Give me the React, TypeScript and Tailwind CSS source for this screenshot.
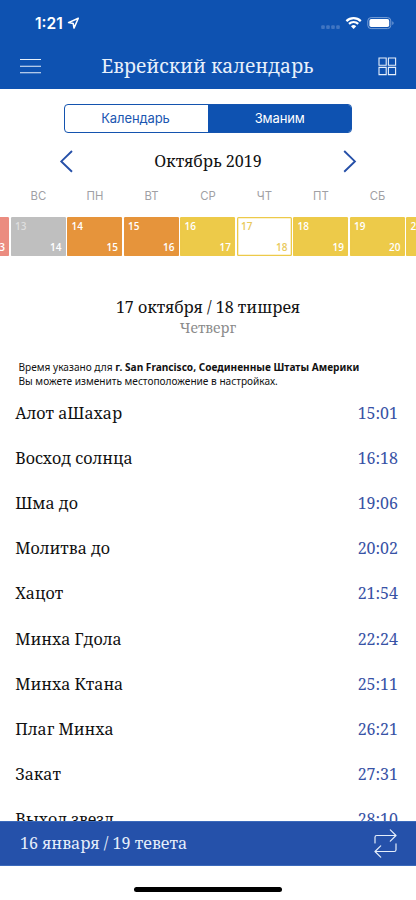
const serif = "font-['Noto_Serif','DejaVu_Serif_Condensed','DejaVu_Serif',serif]";

const weekdays = ['ВС', 'ПН', 'ВТ', 'СР', 'ЧТ', 'ПТ', 'СБ'];

const days = [
  { top: '12', bottom: '13', style: 'bg-[#eb8c80] inset-ring-[#eb8c80] text-white' },
  { top: '13', bottom: '14', style: 'bg-[#bfbfbf] inset-ring-[#bfbfbf] text-white', dim: true },
  { top: '14', bottom: '15', style: 'bg-[#e6943b] inset-ring-[#e6943b] text-white' },
  { top: '15', bottom: '16', style: 'bg-[#e6943b] inset-ring-[#e6943b] text-white' },
  { top: '16', bottom: '17', style: 'bg-[#edca49] inset-ring-[#edca49] text-white' },
  { top: '17', bottom: '18', style: 'bg-white inset-ring-[#edca49] text-[#e9c95c]' },
  { top: '18', bottom: '19', style: 'bg-[#edca49] inset-ring-[#edca49] text-white' },
  { top: '19', bottom: '20', style: 'bg-[#edca49] inset-ring-[#edca49] text-white' },
  { top: '20', bottom: '21', style: 'bg-[#edca49] inset-ring-[#edca49] text-white' },
];

const times = [
  ['Алот аШахар', '15:01'],
  ['Восход солнца', '16:18'],
  ['Шма до', '19:06'],
  ['Молитва до', '20:02'],
  ['Хацот', '21:54'],
  ['Минха Гдола', '22:24'],
  ['Минха Ктана', '25:11'],
  ['Плаг Минха', '26:21'],
  ['Закат', '27:31'],
  ['Выход звезд', '28:10'],
];

function StatusBar() {
  return (
    <div className="flex h-[44px] items-center pt-[2px] pr-[22px] pl-[35px] text-white">
      <span className="font-['Inter',sans-serif] pt-[1px] text-[15.5px] leading-none font-semibold">1:21</span>
      <svg className="ml-[4px]" width="13" height="13" viewBox="0 0 13 13" fill="none" stroke="currentColor" strokeWidth="1.5" strokeLinejoin="round">
        <path d="M11.3 1.2 1.5 5.6l4.7.9.8 4.6z" />
      </svg>
      <svg className="ml-auto" width="74" height="16" viewBox="0 0 74 16">
        <g fill="#4075c2">
          <rect x="1.2" y="10.3" width="3.6" height="3.6" rx="1" />
          <rect x="6.2" y="10.3" width="3.6" height="3.6" rx="1" />
          <rect x="11.2" y="10.3" width="3.6" height="3.6" rx="1" />
          <rect x="16.2" y="10.3" width="3.6" height="3.6" rx="1" />
        </g>
        <g fill="none" stroke="#fff" strokeWidth="2.2">
          <path d="M26.4 6.1a10.3 10.3 0 0 1 14.4 0" />
          <path d="M29 8.9a6.5 6.5 0 0 1 9.2 0" />
        </g>
        <path d="M31 11.2a3.7 3.7 0 0 1 5.2 0l-2.6 2.7z" fill="#fff" />
        <rect x="47.8" y="2.6" width="23" height="11" rx="3.3" fill="none" stroke="#7aa0d7" />
        <rect x="49.4" y="4.1" width="19.8" height="8" rx="1.8" fill="#fff" />
        <path d="M72.3 6.2q1.3.6 1.3 1.9t-1.3 1.9z" fill="#7aa0d7" />
      </svg>
    </div>
  );
}

export default function App() {
  return (
    <div className="flex h-[900px] w-[416px] flex-col overflow-hidden bg-white text-[#111]">
      <header className="h-[88.5px] shrink-0 bg-[#0e52b1]">
        <StatusBar />
        <div className="flex h-[44px] items-center pr-[19px] pl-[20px] text-[#e7f0fb]">
          <svg width="21" height="16" viewBox="0 0 21 16" stroke="currentColor" strokeWidth="1.1">
            <path d="M0 1.5h21M0 8.2h21M0 14.7h21" />
          </svg>
          <h1 className={`${serif} ml-[60.2px] text-[19.2px] leading-none`}>Еврейский календарь</h1>
          <svg className="ml-auto" width="19" height="19" viewBox="0 0 19 19" fill="none" stroke="currentColor" strokeWidth="1.1">
            <path d="M1 1h7.2v7.2H1zM10.4 1h7.2v7.2h-7.2zM1 10.4h7.2v7.2H1zM10.4 10.4h7.2v7.2h-7.2z" />
          </svg>
        </div>
      </header>

      <main className="h-[732px] shrink-0 overflow-hidden">
        <div className="mt-[15.5px] ml-[64px] flex h-[29px] w-[288.4px] overflow-hidden rounded-[4px] border border-[#1454af] font-['Inter',sans-serif] text-[13px]">
          <div className="flex w-[143px] items-center justify-center pr-[2px] tracking-[-0.1px] text-[#1b57b1]">Календарь</div>
          <div className="flex flex-1 items-center justify-center bg-[#0e52b1] tracking-[-0.1px] text-white">Зманим</div>
        </div>

        <div className="mt-[14px] ml-[59px] flex h-[28px] w-[298px] items-center justify-between">
          <svg width="14" height="23" viewBox="0 0 14 23" fill="none" stroke="#2650a8" strokeWidth="1.9">
            <path d="M13 1 2.3 11.4 13 21.8" />
          </svg>
          <h2 className={`${serif} text-[16.1px] leading-none`}>Октябрь 2019</h2>
          <svg width="14" height="23" viewBox="0 0 14 23" fill="none" stroke="#2650a8" strokeWidth="1.9">
            <path d="m1.2 1 10.7 10.4L1.2 21.8" />
          </svg>
        </div>

        <div className="mt-[13px] ml-[10.2px] grid w-[395.5px] grid-cols-7 text-center font-['Inter',sans-serif] text-[11.3px] leading-[16px] text-[#a0a0a4]">
          {weekdays.map((day) => (
            <span key={day}>{day}</span>
          ))}
        </div>

        <div className="mt-[12.5px] -ml-[46px] flex w-[520px] gap-[1.5px] font-['Open_Sans','Noto_Sans',sans-serif] text-[10px] leading-[12px] font-semibold">
          {days.map((day) => (
            <div key={day.top} className={`flex h-[39px] w-[55px] shrink-0 flex-col justify-between rounded-[1.5px] pt-[3px] pr-[4px] pb-[3px] pl-[4.5px] inset-ring-[1.3px] ${day.style}`}>
              <span className={day.dim ? 'text-[#dedede]' : ''}>{day.top}</span>
              <span className="text-right">{day.bottom}</span>
            </div>
          ))}
        </div>

        <div className={`${serif} mt-[39px] text-center`}>
          <h3 className="text-[16px] leading-[24px]">17 октября / 18 тишрея</h3>
          <p className="text-[14px] leading-[18px] text-[#8b8b8b]">Четверг</p>
        </div>

        <p className="mt-[23px] pl-[18.5px] font-['Noto_Sans',sans-serif] text-[10.12px] leading-[14px] whitespace-nowrap">
          Время указано для <b>г. San Francisco, Соединенные Штаты Америки</b>
          <br />
          Вы можете изменить местоположение в настройках.
        </p>

        <ul className={`${serif} mt-[2.5px] text-[16px]`}>
          {times.map(([name, time]) => (
            <li key={name} className="flex h-[45.2px] items-center justify-between pr-[18px] pl-[15.2px]">
              <span>{name}</span>
              <span className="text-[#3852a5]">{time}</span>
            </li>
          ))}
        </ul>
      </main>

      <footer className={`${serif} flex h-[45px] shrink-0 items-center justify-between border-y border-[#3c6abb] bg-[#2551aa] pr-[19px] pl-[20px] text-[16.1px] text-[#e5eefb]`}>
        <span>16 января / 19 тевета</span>
        <svg width="23" height="29" viewBox="0 0 23 29" fill="none" stroke="currentColor" strokeWidth="1.2" strokeLinecap="round" strokeLinejoin="round">
          <path d="M1 14V8.3Q1 6.5 2.8 6.5H22M16.3.8 22 6.5l-5.7 5.7M22 14.8v5.9q0 1.8-1.8 1.8H1M6.7 16.8 1 22.5l5.7 5.7" />
        </svg>
      </footer>
      <div className="mx-auto mt-[21px] h-[5px] w-[148px] shrink-0 rounded-full bg-black" />
    </div>
  );
}
